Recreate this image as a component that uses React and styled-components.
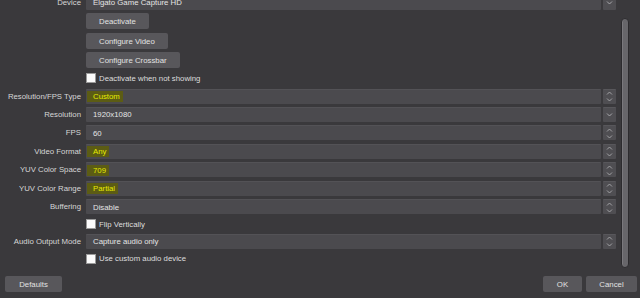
import React from "react";
import styled, { createGlobalStyle } from "styled-components";

const GlobalStyle = createGlobalStyle`
  html, body {
    margin: 0;
    padding: 0;
    background: #3a393c;
    overflow: hidden;
  }
  body {
    font-family: "Liberation Sans", Arial, sans-serif;
    font-size: 7.8px;
    color: #dcdcdc;
  }
`;

const Page = styled.div`
  width: 640px;
  height: 298px;
  display: flex;
  flex-direction: column;
  overflow: hidden;
`;

const Body = styled.div`
  display: flex;
  margin-top: -7.5px;
`;

const Form = styled.div`
  width: 621px;
  display: flex;
  flex-direction: column;
`;

const Row = styled.div`
  height: ${(p) => p.h}px;
  display: grid;
  grid-template-columns: 86px 1fr;
  align-items: center;
`;

const Label = styled.div`
  text-align: right;
  padding-right: 5px;
  color: #d6d6d6;
  white-space: nowrap;
`;

const Field = styled.div`
  display: flex;
  align-items: center;
`;

const Combo = styled.div`
  flex: 1;
  height: 15px;
  display: flex;
  gap: 2px;
`;

const ComboMain = styled.div`
  flex: 1;
  background: #4b4a4e;
  border-top: 1px solid #535256;
  border-radius: 1px;
  display: flex;
  align-items: center;
  padding-left: 1px;
  color: #e4e4e4;
`;

const Value = styled.span`
  padding: 1px 3px 1px 6px;
  line-height: 9px;
  background: ${(p) => (p.mark ? "#5c5c14" : "transparent")};
  color: ${(p) => (p.mark ? "#e6ea00" : "#e4e4e4")};
`;

const ArrowBox = styled.div`
  width: 13px;
  background: #4f4e52;
  border-top: 1px solid #58575b;
  border-radius: 1px;
  display: flex;
  align-items: center;
  justify-content: center;
`;

const Button = styled.button`
  height: 16px;
  padding: 0 ${(p) => p.pad || 13}px;
  width: ${(p) => (p.w ? `${p.w}px` : "auto")};
  background: #58575b;
  border: none;
  border-radius: 2px;
  color: #e2e2e2;
  font-family: "Liberation Sans", Arial, sans-serif;
  font-size: 7.8px;
  text-align: center;
`;

const Check = styled.label`
  display: flex;
  align-items: center;
  gap: 3px;
  color: #dedede;
`;

const Box = styled.span`
  width: 8px;
  height: 8px;
  background: #fbfbfb;
  border: 0.5px solid #9a9a9a;
`;

const Scroll = styled.div`
  width: 19px;
  padding: 25.5px 0 0 5px;
  display: flex;
`;

const Thumb = styled.div`
  width: 8px;
  height: 250px;
  border-radius: 4px;
  background: #67666a;
  border: 1px solid #2c2b2e;
  box-shadow: inset 1px 0 0 #7a797d;
  box-sizing: border-box;
`;

const Footer = styled.div`
  margin-top: 8px;
  padding: 0 3px 0 5px;
  display: flex;
  align-items: center;
  gap: 4px;
`;

const Spacer = styled.div`
  flex: 1;
`;

const Updown = () => (
  <svg width="7" height="11" viewBox="0 0 7 11">
    <path d="M1 3.5 L3.5 1 L6 3.5 M1 7.5 L3.5 10 L6 7.5" fill="none" stroke="#a9a9ad" strokeWidth="0.9" />
  </svg>
);

const Down = () => (
  <svg width="7" height="6" viewBox="0 0 7 6">
    <path d="M1 1.5 L3.5 4 L6 1.5" fill="none" stroke="#b0b0b4" strokeWidth="0.9" />
  </svg>
);

const ComboBox = ({ value, mark, single }) => (
  <Combo>
    <ComboMain>
      <Value mark={mark}>{value}</Value>
    </ComboMain>
    <ArrowBox>{single ? <Down /> : <Updown />}</ArrowBox>
  </Combo>
);

const rows = [
  { label: "Resolution/FPS Type", value: "Custom", mark: true, h: 18 },
  { label: "Resolution", value: "1920x1080", single: true, h: 18.5 },
  { label: "FPS", value: "60", h: 18.5 },
  { label: "Video Format", value: "Any", mark: true, h: 18.5 },
  { label: "YUV Color Space", value: "709", mark: true, h: 18.5 },
  { label: "YUV Color Range", value: "Partial", mark: true, h: 18.5 },
  { label: "Buffering", value: "Disable", h: 18 },
];

const App = () => {
  return (
    <Page>
      <GlobalStyle />
      <Body>
        <Form>
          <Row h={19}>
            <Label>Device</Label>
            <Field>
              <ComboBox value="Elgato Game Capture HD" single />
            </Field>
          </Row>
          <Row h={19.5}>
            <span />
            <Field>
              <Button>Deactivate</Button>
            </Field>
          </Row>
          <Row h={20}>
            <span />
            <Field>
              <Button>Configure Video</Button>
            </Field>
          </Row>
          <Row h={18}>
            <span />
            <Field>
              <Button>Configure Crossbar</Button>
            </Field>
          </Row>
          <Row h={18}>
            <span />
            <Check>
              <Box />
              Deactivate when not showing
            </Check>
          </Row>
          {rows.map((r) => (
            <Row h={r.h} key={r.label}>
              <Label>{r.label}</Label>
              <Field>
                <ComboBox value={r.value} mark={r.mark} single={r.single} />
              </Field>
            </Row>
          ))}
          <Row h={17}>
            <span />
            <Check>
              <Box />
              Flip Vertically
            </Check>
          </Row>
          <Row h={17.5}>
            <Label>Audio Output Mode</Label>
            <Field>
              <ComboBox value="Capture audio only" />
            </Field>
          </Row>
          <Row h={17}>
            <span />
            <Check>
              <Box />
              Use custom audio device
            </Check>
          </Row>
        </Form>
        <Scroll>
          <Thumb />
        </Scroll>
      </Body>
      <Footer>
        <Button w={57} pad={0}>Defaults</Button>
        <Spacer />
        <Button w={39} pad={0}>OK</Button>
        <Button w={51} pad={0}>Cancel</Button>
      </Footer>
    </Page>
  );
};

export default App;
